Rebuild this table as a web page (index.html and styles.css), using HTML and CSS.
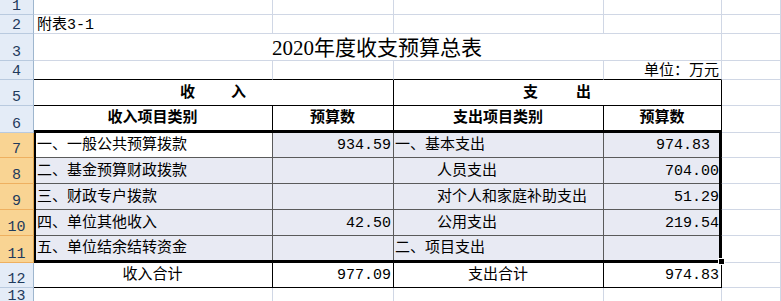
FILE: index.html
```html
<!DOCTYPE html>
<html lang="zh-CN">
<head>
<meta charset="utf-8">
<title>2020年度收支预算总表</title>
<link rel="stylesheet" href="styles.css">
</head>
<body>
<div class="sheet">
  <div class="rh">1</div>
  <div class="c"></div><div class="c"></div><div class="c"></div><div class="c"></div><div class="c"></div>

  <div class="rh">2</div>
  <div class="c low colA">附表3-1</div><div class="c"></div><div class="c"></div><div class="c"></div><div class="c"></div>

  <div class="rh">3</div>
  <div class="c title span4">2020年度收支预算总表</div><div class="c"></div>

  <div class="rh">4</div>
  <div class="c tb"></div><div class="c tb"></div><div class="c tb"></div><div class="c tb low right">单位：万元</div><div class="c"></div>

  <div class="rh">5</div>
  <div class="c t span2 ctr bold"><span class="spaced s1"><span>收</span><span>入</span></span></div>
  <div class="c t span2 ctr bold"><span class="spaced s2"><span>支</span><span>出</span></span></div>
  <div class="c"></div>

  <div class="rh">6</div>
  <div class="c t dbl ctr bold">收入项目类别</div>
  <div class="c t dbl ctr bold">预算数</div>
  <div class="c t dbl ctr bold">支出项目类别</div>
  <div class="c t dbl ctr bold">预算数</div>
  <div class="c"></div>

  <div class="rh on">7</div>
  <div class="c s colA active">一、一般公共预算拨款</div>
  <div class="c s num">934.59</div>
  <div class="c s">一、基本支出</div>
  <div class="c s last num trail">974.83</div>
  <div class="c"></div>

  <div class="rh on">8</div>
  <div class="c s colA">二、基金预算财政拨款</div>
  <div class="c s num"></div>
  <div class="c s ind">人员支出</div>
  <div class="c s last num">704.00</div>
  <div class="c"></div>

  <div class="rh on">9</div>
  <div class="c s colA">三、财政专户拨款</div>
  <div class="c s num"></div>
  <div class="c s ind">对个人和家庭补助支出</div>
  <div class="c s last num">51.29</div>
  <div class="c"></div>

  <div class="rh on">10</div>
  <div class="c s colA">四、单位其他收入</div>
  <div class="c s num">42.50</div>
  <div class="c s ind">公用支出</div>
  <div class="c s last num">219.54</div>
  <div class="c"></div>

  <div class="rh on">11</div>
  <div class="c s dbl colA">五、单位结余结转资金</div>
  <div class="c s dbl num"></div>
  <div class="c s dbl">二、项目支出</div>
  <div class="c s dbl last num"></div>
  <div class="c"></div>

  <div class="rh">12</div>
  <div class="c t ctr">收入合计</div>
  <div class="c t num">977.09</div>
  <div class="c t ctr">支出合计</div>
  <div class="c t num">974.83</div>
  <div class="c"></div>

  <div class="rh last-row">13</div>
  <div class="c"></div><div class="c"></div><div class="c"></div><div class="c"></div><div class="c"></div>

  <div class="selbox"></div>
  <div class="handle"></div>
</div>
</body>
</html>
```

FILE: styles.css
```css
html, body {
  margin: 0;
  padding: 0;
  background: #fff;
}

.sheet {
  position: relative;
  width: 781px;
  height: 301px;
  overflow: hidden;
  display: grid;
  grid-template-columns: 34px 239px 121px 210px 118px 1fr;
  grid-template-rows: 15px 19px 27px 19px 26px 27px 25px 26px 26px 26px 27px 25px 1fr;
  font-family: "Liberation Mono", "Noto Sans CJK SC", monospace;
  font-size: 15px;
  line-height: 15px;
  color: #000;
}

.rh {
  box-sizing: border-box;
  background: #e4ecf7;
  border-right: 1px solid #9eb6ce;
  border-bottom: 1px solid #b9cadf;
  color: #1f3a5c;
  font-family: "Liberation Mono", monospace;
  font-size: 15px;
  line-height: 11px;
  display: flex;
  align-items: flex-end;
  justify-content: center;
  padding-bottom: 2px;
}

.rh.last-row {
  align-items: flex-start;
  padding-top: 3px;
  padding-bottom: 0;
}

.rh.on {
  background: #f9d493;
  border-bottom-color: #eeb060;
  border-right-color: #e0a54f;
}

.c {
  box-sizing: border-box;
  border-right: 1px solid #d0d7e5;
  border-bottom: 1px solid #d0d7e5;
  display: flex;
  align-items: center;
  padding: 1px 2px 0 1px;
  white-space: nowrap;
  min-width: 0;
}

.colA { padding-left: 3px; }

.low {
  align-items: flex-end;
  padding-top: 0;
  padding-bottom: 0;
}

.right {
  justify-content: flex-end;
}

.title {
  font-family: "Liberation Serif", "Noto Sans CJK SC", serif;
  font-size: 21px;
  line-height: 21px;
  justify-content: center;
  padding-top: 2px;
}

.span4 { grid-column: span 4; }
.span2 { grid-column: span 2; }

.tb { border-bottom-color: #000; }

.t {
  border-right-color: #000;
  border-bottom-color: #000;
}

.dbl {
  border-bottom: 3px double #000;
}

.ctr { justify-content: center; }

.bold { font-weight: 700; }

.spaced { display: flex; }
.s1 { gap: 36px; }
.s2 { gap: 38px; }

.s {
  background: #e8eaf3;
  border-right-color: #5a5a5a;
  border-bottom-color: #5a5a5a;
}

.s.dbl { border-bottom: 3px double #000; }

.s.active { background: #fff; }

.s.last { border-right-color: #000; }

.num {
  justify-content: flex-end;
  padding-right: 2px;
}

.trail { padding-right: 11px; }

.ind { padding-left: 43px; }

.selbox {
  position: absolute;
  left: 34px;
  top: 130px;
  width: 687px;
  height: 132px;
  box-sizing: border-box;
  border: 2px solid #000;
  pointer-events: none;
}

.handle {
  position: absolute;
  left: 718px;
  top: 258px;
  width: 7px;
  height: 7px;
  box-sizing: border-box;
  background: #000;
  border: 1px solid #fff;
}
```
